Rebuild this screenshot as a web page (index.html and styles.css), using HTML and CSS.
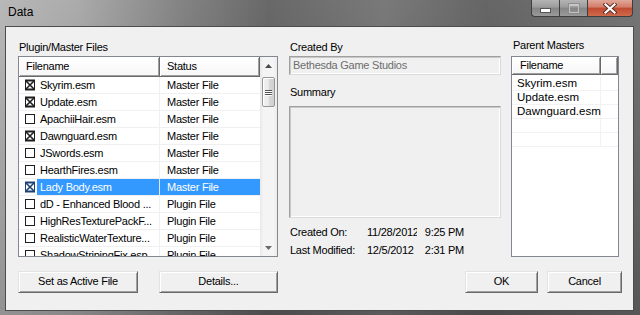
FILE: index.html
```html
<!DOCTYPE html>
<html>
<head>
<meta charset="utf-8">
<link rel="stylesheet" href="styles.css">
</head>
<body>
<div class="window">
  <div class="titlebar">
    <span class="title">Data</span>
    <div class="caption">
      <div class="cap min"><span class="min-bar"></span></div>
      <div class="cap max"><span class="max-box"></span></div>
      <div class="cap close">
        <svg width="14" height="11" viewBox="0 0 14 11"><path d="M2.5 1.5 L11.5 9.5 M11.5 1.5 L2.5 9.5" stroke="#5a2a22" stroke-width="4" stroke-linecap="square"/><path d="M2.5 1.5 L11.5 9.5 M11.5 1.5 L2.5 9.5" stroke="#ffffff" stroke-width="2.2" stroke-linecap="square"/></svg>
      </div>
    </div>
  </div>
  <div class="client">
    <div class="main">
      <div class="col col-left">
        <div class="label">Plugin/Master Files</div>
        <div class="listbox files">
          <div class="table">
            <div class="header">
              <div class="hcell c-name">Filename</div>
              <div class="hcell c-status">Status</div>
            </div>
            <div class="row"><div class="cell c-name"><svg class="chk" width="12" height="12" viewBox="0 0 12 12"><rect x="1.5" y="1.5" width="9" height="9" fill="none" stroke="currentColor"/><path d="M1 1.5 H11 M1 10.5 H11" stroke="currentColor" stroke-width="2"/><path d="M2 2 L10 10 M10 2 L2 10" stroke="currentColor" stroke-width="1.6"/></svg><span class="txt">Skyrim.esm</span></div><div class="cell c-status">Master File</div></div>
            <div class="row"><div class="cell c-name"><svg class="chk" width="12" height="12" viewBox="0 0 12 12"><rect x="1.5" y="1.5" width="9" height="9" fill="none" stroke="currentColor"/><path d="M1 1.5 H11 M1 10.5 H11" stroke="currentColor" stroke-width="2"/><path d="M2 2 L10 10 M10 2 L2 10" stroke="currentColor" stroke-width="1.6"/></svg><span class="txt">Update.esm</span></div><div class="cell c-status">Master File</div></div>
            <div class="row"><div class="cell c-name"><svg class="chk" width="12" height="12" viewBox="0 0 12 12"><rect x="1.5" y="1.5" width="9" height="9" fill="none" stroke="currentColor"/></svg><span class="txt">ApachiiHair.esm</span></div><div class="cell c-status">Master File</div></div>
            <div class="row"><div class="cell c-name"><svg class="chk" width="12" height="12" viewBox="0 0 12 12"><rect x="1.5" y="1.5" width="9" height="9" fill="none" stroke="currentColor"/><path d="M1 1.5 H11 M1 10.5 H11" stroke="currentColor" stroke-width="2"/><path d="M2 2 L10 10 M10 2 L2 10" stroke="currentColor" stroke-width="1.6"/></svg><span class="txt">Dawnguard.esm</span></div><div class="cell c-status">Master File</div></div>
            <div class="row"><div class="cell c-name"><svg class="chk" width="12" height="12" viewBox="0 0 12 12"><rect x="1.5" y="1.5" width="9" height="9" fill="none" stroke="currentColor"/></svg><span class="txt">JSwords.esm</span></div><div class="cell c-status">Master File</div></div>
            <div class="row"><div class="cell c-name"><svg class="chk" width="12" height="12" viewBox="0 0 12 12"><rect x="1.5" y="1.5" width="9" height="9" fill="none" stroke="currentColor"/></svg><span class="txt">HearthFires.esm</span></div><div class="cell c-status">Master File</div></div>
            <div class="row selected"><div class="cell c-name"><svg class="chk" width="12" height="12" viewBox="0 0 12 12"><rect x="1.5" y="1.5" width="9" height="9" fill="none" stroke="currentColor"/><path d="M1 1.5 H11 M1 10.5 H11" stroke="currentColor" stroke-width="2"/><path d="M2 2 L10 10 M10 2 L2 10" stroke="currentColor" stroke-width="1.6"/></svg><span class="txt">Lady Body.esm</span></div><div class="cell c-status">Master File</div></div>
            <div class="row"><div class="cell c-name"><svg class="chk" width="12" height="12" viewBox="0 0 12 12"><rect x="1.5" y="1.5" width="9" height="9" fill="none" stroke="currentColor"/></svg><span class="txt">dD - Enhanced Blood ...</span></div><div class="cell c-status">Plugin File</div></div>
            <div class="row"><div class="cell c-name"><svg class="chk" width="12" height="12" viewBox="0 0 12 12"><rect x="1.5" y="1.5" width="9" height="9" fill="none" stroke="currentColor"/></svg><span class="txt">HighResTexturePackF...</span></div><div class="cell c-status">Plugin File</div></div>
            <div class="row"><div class="cell c-name"><svg class="chk" width="12" height="12" viewBox="0 0 12 12"><rect x="1.5" y="1.5" width="9" height="9" fill="none" stroke="currentColor"/></svg><span class="txt">RealisticWaterTexture...</span></div><div class="cell c-status">Plugin File</div></div>
            <div class="row"><div class="cell c-name"><svg class="chk" width="12" height="12" viewBox="0 0 12 12"><rect x="1.5" y="1.5" width="9" height="9" fill="none" stroke="currentColor"/></svg><span class="txt">ShadowStripingFix.esp</span></div><div class="cell c-status">Plugin File</div></div>
          </div>
          <div class="vscroll">
            <div class="sb-btn"><svg width="7" height="4" viewBox="0 0 7 4"><path d="M0 4 L3.5 0 L7 4 Z" fill="#4a4a4a"/></svg></div>
            <div class="sb-track">
              <div class="thumb"><span class="grip"></span><span class="grip"></span><span class="grip"></span></div>
            </div>
            <div class="sb-btn"><svg width="7" height="4" viewBox="0 0 7 4"><path d="M0 0 L7 0 L3.5 4 Z" fill="#6a6a6a"/></svg></div>
          </div>
        </div>
      </div>

      <div class="col col-mid">
        <div class="label">Created By</div>
        <div class="field">Bethesda Game Studios</div>
        <div class="label label-summary">Summary</div>
        <div class="summary"></div>
        <div class="info">
          <div class="info-row"><span class="info-label">Created On:</span><span class="info-value"><span class="date">11/28/2012</span><span class="time">9:25 PM</span></span></div>
          <div class="info-row"><span class="info-label">Last Modified:</span><span class="info-value"><span class="date">12/5/2012</span><span class="time">2:31 PM</span></span></div>
        </div>
      </div>

      <div class="col col-right">
        <div class="label label-pm">Parent Masters</div>
        <div class="listbox masters">
          <div class="header">
            <div class="hcell m-name">Filename</div>
            <div class="hcell m-rest"></div>
          </div>
          <div class="mrows">
            <div class="mrow"><span class="m-name-cell">Skyrim.esm</span><span class="m-rest-cell"></span></div>
            <div class="mrow"><span class="m-name-cell">Update.esm</span><span class="m-rest-cell"></span></div>
            <div class="mrow"><span class="m-name-cell">Dawnguard.esm</span><span class="m-rest-cell"></span></div>
            <div class="mrow"><span class="m-name-cell"></span><span class="m-rest-cell"></span></div>
            <div class="mrow"><span class="m-name-cell"></span><span class="m-rest-cell"></span></div>
          </div>
        </div>
      </div>
    </div>

    <div class="buttons">
      <div class="btn btn-active">Set as Active File</div>
      <div class="btn btn-details">Details...</div>
      <div class="btn btn-ok">OK</div>
      <div class="btn btn-cancel">Cancel</div>
    </div>
  </div>
</div>
</body>
</html>
```

FILE: styles.css
```css
html, body {
  margin: 0;
  padding: 0;
}

body {
  width: 640px;
  height: 315px;
  overflow: hidden;
  font-family: "Liberation Sans", Arial, sans-serif;
  font-size: 11px;
  letter-spacing: -0.25px;
  color: #000;
  background: #6a6a6a;
}

.window {
  width: 640px;
  height: 315px;
  display: flex;
  flex-direction: column;
  background:
    linear-gradient(180deg, rgba(255,255,255,0.08) 0, rgba(0,0,0,0.18) 100%),
    linear-gradient(90deg, #b2b2b2 0, #a4a4a4 12%, #7a7a7a 28%, #5c5c5c 42%, #6e6e6e 60%, #595959 76%, #6a6a6a 100%);
}

/* ---------- title bar ---------- */
.titlebar {
  height: 26px;
  flex: none;
  display: flex;
  justify-content: space-between;
  align-items: flex-start;
  padding: 0 7px 0 8px;
  box-sizing: border-box;
}

.title {
  font-size: 12px;
  letter-spacing: 0;
  line-height: 25px;
  color: #000;
}

.caption {
  display: flex;
  height: 17px;
}

.cap {
  height: 17px;
  box-sizing: border-box;
  display: flex;
  align-items: center;
  justify-content: center;
  border: 1px solid #3e3e3e;
  border-top: none;
}

.min, .max {
  width: 28px;
  background: linear-gradient(180deg, #b4b4b4 0, #9c9c9c 45%, #858585 50%, #9a9a9a 100%);
}

.min {
  border-radius: 0 0 0 4px;
  border-right: none;
}

.max {
  border-right: none;
}

.min-bar {
  width: 9px;
  height: 3px;
  margin-top: 5px;
  background: #fff;
  box-shadow: 0 0 0 1px #555;
}

.max-box {
  width: 8px;
  height: 6px;
  border: 1px solid #cfcfcf;
  border-top-width: 2px;
  box-shadow: 0 0 0 1px #8a8a8a;
  opacity: 0.8;
}

.close {
  width: 46px;
  border-radius: 0 0 4px 0;
  background: linear-gradient(180deg, #e0a89a 0, #d27c68 45%, #c04a30 50%, #cf6a4c 100%);
}

/* ---------- client ---------- */
.client {
  flex: 1;
  margin: 0 6px 4px 5px;
  border: 1px solid #4c4c4c;
  background: #f0f0f0;
  padding: 12px 14px 0 12px;
  display: flex;
  flex-direction: column;
}

.main {
  height: 218px;
  display: flex;
  align-items: flex-start;
  gap: 11px;
}

.col {
  display: flex;
  flex-direction: column;
}

.col-left { width: 260px; }
.col-mid { width: 212px; }
.col-right { width: 108px; margin-left: -1px; }

.label {
  line-height: 16px;
  height: 16px;
  margin-bottom: 1px;
  padding-left: 1px;
  white-space: nowrap;
}

.label-pm {
  padding-left: 2px;
  margin-top: -2px;
  margin-bottom: 3px;
}

/* ---------- list boxes ---------- */
.listbox {
  height: 201px;
  box-sizing: border-box;
  border: 1px solid #828790;
  background: #fff;
  overflow: hidden;
}

.files {
  display: flex;
}

.table {
  width: 241px;
  overflow: hidden;
}

.header {
  display: flex;
  height: 20px;
}

.hcell {
  box-sizing: border-box;
  height: 100%;
  line-height: 18px;
  padding-left: 7px;
  background: linear-gradient(180deg, #ffffff 0, #f7f7f7 100%);
  border-right: 1px solid #696969;
  border-bottom: 1px solid #696969;
  box-shadow: inset 1px 1px 0 #ffffff, inset -1px -1px 0 #a0a0a0;
}

.c-name { width: 141px; }
.c-status { width: 100px; }

.row {
  display: flex;
  height: 17px;
}

.cell {
  box-sizing: border-box;
  height: 17px;
  line-height: 16px;
  border-bottom: 1px solid #f0f0f0;
  white-space: nowrap;
  overflow: hidden;
}

.cell.c-name {
  display: flex;
  align-items: stretch;
  padding-left: 5px;
  border-right: 1px solid #f0f0f0;
}

.cell.c-status {
  padding-left: 7px;
}

.chk {
  flex: none;
  align-self: center;
  margin-top: -1px;
  margin-right: 1px;
  color: #1e1e1e;
}

.txt {
  flex: 1;
  padding-left: 3px;
  overflow: hidden;
}

.selected .txt,
.selected .c-status {
  background: #3399ff;
  color: #fff;
}

.selected .cell.c-name {
  border-right-color: #d8e9ff;
}

.selected .chk {
  color: #1d4174;
}

/* scrollbar */
.vscroll {
  width: 17px;
  display: flex;
  flex-direction: column;
  background: linear-gradient(90deg, #e8e8e8 0, #f4f4f4 20%, #f4f4f4 80%, #ececec 100%);
}

.sb-btn {
  height: 17px;
  flex: none;
  display: flex;
  align-items: center;
  justify-content: center;
}

.sb-track {
  flex: 1;
  padding: 3px 2px 0 2px;
}

.thumb {
  height: 30px;
  box-sizing: border-box;
  border: 1px solid #979797;
  border-radius: 2px;
  background: linear-gradient(90deg, #f3f3f3 0, #e9e9e9 50%, #d8d8d8 51%, #d0d0d0 100%);
  box-shadow: inset 1px 1px 0 #fff;
  display: flex;
  flex-direction: column;
  align-items: center;
  justify-content: center;
  gap: 1px;
}

.grip {
  width: 7px;
  height: 1px;
  background: #555;
  box-shadow: 0 1px 0 #fff;
}

/* ---------- middle ---------- */
.field {
  height: 19px;
  box-sizing: border-box;
  border: 1px solid #a0a0a0;
  border-right-color: #dadada;
  border-bottom-color: #dadada;
  box-shadow: inset 1px 1px 0 #c8c8c8, inset -1px -1px 0 #ffffff;
  background: #f0f0f0;
  color: #6d6d6d;
  line-height: 16px;
  padding-left: 3px;
  white-space: nowrap;
  overflow: hidden;
}

.label-summary {
  margin-top: 9px;
  margin-bottom: 6px;
}

.summary {
  height: 112px;
  box-sizing: border-box;
  border: 1px solid #a0a0a0;
  border-right-color: #dadada;
  border-bottom-color: #dadada;
  box-shadow: inset 1px 1px 0 #c8c8c8, inset -1px -1px 0 #ffffff;
  background: #f0f0f0;
}

.info {
  margin-top: 5px;
}

.info-row {
  display: flex;
  height: 18px;
  line-height: 18px;
  white-space: nowrap;
}

.info-label {
  width: 77px;
  padding-left: 1px;
  box-sizing: border-box;
  flex: none;
}

.info-value {
  width: 97px;
  display: flex;
  padding-left: 1px;
}

.date {
  width: 50px;
  overflow: hidden;
  flex: none;
}

.time {
  margin-left: auto;
}

/* ---------- right list ---------- */
.masters {
  display: flex;
  flex-direction: column;
}

.masters .header {
  height: 18px;
  flex: none;
}

.masters .hcell {
  line-height: 16px;
}

.m-name { width: 89px; padding-left: 8px; }
.m-rest { flex: 1; }

.mrows {
  padding-top: 2px;
}

.mrow {
  display: flex;
  height: 14px;
  box-sizing: border-box;
  border-bottom: 1px solid #f2f2f2;
}

.m-name-cell {
  width: 89px;
  box-sizing: border-box;
  padding-left: 5px;
  font-size: 11.5px;
  letter-spacing: 0;
  line-height: 13px;
  border-right: 1px solid #f2f2f2;
  white-space: nowrap;
}

.m-rest-cell {
  flex: 1;
}

/* ---------- buttons ---------- */
.buttons {
  display: flex;
  margin-top: 14px;
  margin-right: -3px;
}

.btn {
  height: 22px;
  box-sizing: border-box;
  line-height: 19px;
  text-align: center;
  background: #f0f0f0;
  border: 1px solid;
  border-color: #e3e3e3 #696969 #696969 #e3e3e3;
  box-shadow: inset 1px 1px 0 #ffffff, inset -1px -1px 0 #a0a0a0;
  white-space: nowrap;
}

.btn-active { width: 120px; }
.btn-details { width: 119px; margin-left: 21px; }
.btn-ok { width: 73px; margin-left: auto; }
.btn-cancel { width: 75px; margin-left: 9px; }
```
